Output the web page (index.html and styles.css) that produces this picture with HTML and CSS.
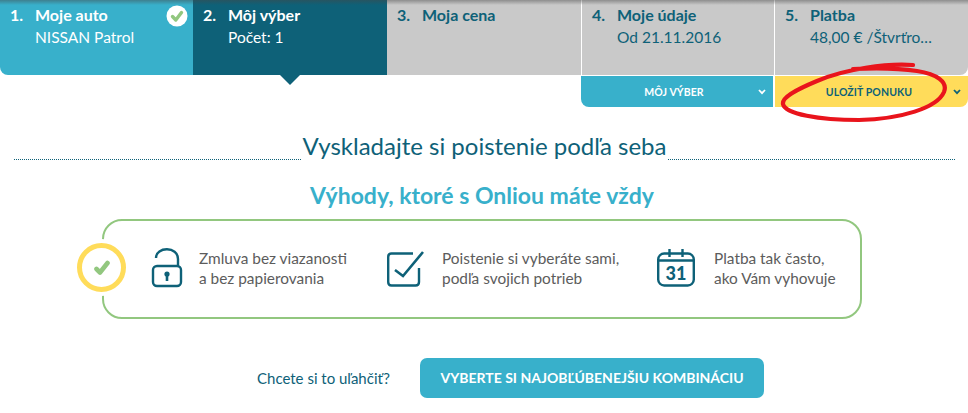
FILE: index.html
```html
<!DOCTYPE html>
<html>
<head>
<meta name="viewport" content="width=device-width, initial-scale=1">
<title>Moj vyber</title>
<link rel="stylesheet" href="styles.css">
</head>
<body>

<div class="steps">
  <div class="step done">
    <span class="num">1.</span>
    <div class="info"><b>Moje auto</b><span>NISSAN Patrol</span></div>
    <svg class="done-icon" width="22" height="22" viewBox="0 0 22 22">
      <circle cx="11" cy="11" r="10.5" fill="#fff"/>
      <path d="M6.5 11.5 L9.8 15 L15.5 7.5" fill="none" stroke="#92c77f" stroke-width="3.4" stroke-linecap="round" stroke-linejoin="round"/>
    </svg>
  </div>
  <div class="step active">
    <span class="num">2.</span>
    <div class="info"><b>Môj výber</b><span>Počet: 1</span></div>
  </div>
  <div class="step">
    <span class="num">3.</span>
    <div class="info"><b>Moja cena</b></div>
  </div>
  <div class="step line">
    <span class="num">4.</span>
    <div class="info"><b>Moje údaje</b><span>Od 21.11.2016</span></div>
  </div>
  <div class="step line last">
    <span class="num">5.</span>
    <div class="info"><b>Platba</b><span>48,00 € /Štvrťro…</span></div>
  </div>
</div>
<div class="pointer"></div>

<div class="actions">
  <div class="action blue">
    <span>MÔJ VÝBER</span>
    <svg class="chev" width="8" height="6" viewBox="0 0 8 6"><path d="M1 1 L4 4.2 L7 1" fill="none" stroke="#fff" stroke-width="1.8"/></svg>
  </div>
  <div class="action yellow">
    <span>ULOŽIŤ PONUKU</span>
    <svg class="chev" width="8" height="6" viewBox="0 0 8 6"><path d="M1 1 L4 4.2 L7 1" fill="none" stroke="#0e6178" stroke-width="1.8"/></svg>
  </div>
  <!-- red hand drawn circle -->
  <svg class="scribble" width="184" height="66" viewBox="0 0 184 66">
    <path d="M134 3 C108 1 66 7 38 19 C14 29 3 36 4 42 C6 52 40 58 80 58 C122 57 158 46 165 30 C169 20 158 12 138 9 C118 6 96 6 74 7" fill="none" stroke="#e9141c" stroke-width="4.2" stroke-linecap="round"/>
  </svg>
</div>

<div class="title-row">
  <h1>Vyskladajte si poistenie podľa seba</h1>
</div>

<h2 class="sub">Výhody, ktoré s Onliou máte vždy</h2>

<div class="benefits">
  <div class="badge">
    <svg width="20" height="16" viewBox="0 0 20 16"><path d="M4.5 9 L8 12.500 L15.500 3" fill="none" stroke="#92c77f" stroke-width="4.6" stroke-linecap="round" stroke-linejoin="round"/></svg>
  </div>
  <div class="benefit first">
    <svg width="32" height="40" viewBox="0 0 32 40">
      <path d="M5 10 C5 -1.500 27 -2 27 11 V18" fill="none" stroke="#0e6178" stroke-width="2.400"/>
      <rect x="2" y="18" width="28" height="20" rx="4" fill="none" stroke="#0e6178" stroke-width="2.400"/>
      <circle cx="16" cy="26" r="2.600" fill="#0e6178"/>
      <rect x="14.700" y="26" width="2.600" height="7" fill="#0e6178"/>
    </svg>
    <p>Zmluva bez viazanosti<br>a bez papierovania</p>
  </div>
  <div class="benefit second">
    <svg width="38" height="38" viewBox="0 0 38 38">
      <path d="M26 4.500 H4.500 Q1.200 4.500 1.200 8 V33 Q1.200 36.500 4.500 36.500 H28.500 Q32 36.500 32 33 V19" fill="none" stroke="#0e6178" stroke-width="2.400"/>
      <path d="M8 21 L16 27 L36 3" fill="none" stroke="#0e6178" stroke-width="2.600"/>
    </svg>
    <p>Poistenie si vyberáte sami,<br>podľa svojich potrieb</p>
  </div>
  <div class="benefit third">
    <div class="cal">
      <svg width="38" height="38" viewBox="0 0 38 38">
        <rect x="1.200" y="4.500" width="35.600" height="32" rx="6" fill="none" stroke="#0e6178" stroke-width="2.400"/>
        <path d="M1 11.500 H37 M12.500 0 V8 M25.500 0 V8" fill="none" stroke="#0e6178" stroke-width="2.400"/>
      </svg>
      <span>31</span>
    </div>
    <p>Platba tak často,<br>ako Vám vyhovuje</p>
  </div>
</div>

<div class="bottom">
  <span>Chcete si to uľahčiť?</span>
  <a class="big-btn">VYBERTE SI NAJOBĽÚBENEJŠIU KOMBINÁCIU</a>
</div>

</body>
</html>
```

FILE: styles.css
```css
* {
  box-sizing: border-box;
}

body {
  margin: 0;
  width: 968px;
  height: 413px;
  overflow: hidden;
  position: relative;
  background: #fff;
  font-family: Lato, "Open Sans", sans-serif;
  color: #0e6178;
}

/* Top steps */
.steps {
  display: grid;
  grid-template-columns: 193px 194px 194px 193px 194px;
  height: 75px;
  border-radius: 0 0 8px 8px;
  overflow: hidden;
  position: relative;
}

.steps:after {
  content: "";
  position: absolute;
  top: 0;
  left: 0;
  right: 0;
  height: 5px;
  background: linear-gradient(rgba(70, 70, 70, 0.45), rgba(70, 70, 70, 0));
}

.step {
  display: flex;
  position: relative;
  padding: 4px 0 0 10px;
  background: #c9c9c9;
  font-size: 16px;
  line-height: 22px;
  white-space: nowrap;
}

.step.line {
  border-left: 1px solid #fff;
}

.step.done {
  background: #38b0cb;
  color: #fff;
}

.step.active {
  background: #0e6178;
  color: #fff;
}

.num {
  width: 25px;
  font-weight: 700;
}

.info {
  display: flex;
  flex-direction: column;
  font-size: 15.5px;
}

.info b {
  font-size: 16px;
  font-weight: 700;
}

.done-icon {
  position: absolute;
  top: 5px;
  right: 5px;
}

/* little arrow under the active step */
.pointer {
  position: absolute;
  left: 280px;
  top: 75px;
  width: 0;
  height: 0;
  border-left: 10px solid transparent;
  border-right: 10px solid transparent;
  border-top: 10px solid #0e6178;
}

/* Buttons under the steps */
.actions {
  display: flex;
  justify-content: flex-end;
  gap: 2px;
  margin-top: 1px;
  position: relative;
}

.action {
  display: flex;
  align-items: center;
  position: relative;
  height: 31px;
  font-size: 10.5px;
  font-weight: 700;
  letter-spacing: 0.1px;
}

.action span {
  flex: 1;
  text-align: center;
}

.action.blue {
  width: 192px;
  background: #38b0cb;
  color: #fff;
  border-radius: 0 0 0 8px;
  padding: 0 7px 0 0;
}

.action.yellow {
  width: 193px;
  background: #ffdc5a;
  color: #0e6178;
  border-radius: 0 0 8px 0;
  padding: 0 7px 0 0;
}

.action.blue span {
  padding-left: 9px;
}

.action.yellow span {
  padding-left: 10px;
}

.scribble {
  position: absolute;
  left: 779px;
  top: -14px;
}

/* Headings */
.title-row {
  display: flex;
  align-items: center;
  justify-content: center;
  margin: 24px 13px 0 14px;
  height: 30px;
  background: repeating-linear-gradient(90deg, #0e6178 0 1px, transparent 1px 2px) 0 28px / 100% 1px no-repeat;
}

h1 {
  margin: 0;
  padding: 0 2px;
  background: #fff;
  font-size: 24px;
  font-weight: 400;
  line-height: 30px;
  color: #0e6178;
}

.sub {
  margin: 19px 0 0;
  padding-right: 4px;
  text-align: center;
  font-size: 23px;
  font-weight: 700;
  line-height: 30px;
  color: #38b0cb;
}

/* Green box */
.benefits {
  display: flex;
  align-items: center;
  position: relative;
  width: 760px;
  height: 100px;
  margin: 9px 0 0 102px;
  border: 2px solid #92c77f;
  border-radius: 20px;
}

.badge {
  display: flex;
  align-items: center;
  justify-content: center;
  position: absolute;
  left: -27px;
  top: 22px;
  width: 49px;
  height: 49px;
  border: 5px solid #ffdc5a;
  border-radius: 50%;
  background: #fff;
  box-shadow: 0 0 0 4px #fff;
}

.benefit {
  display: flex;
  align-items: center;
  position: absolute;
  top: 27px;
  height: 40px;
  font-size: 15.4px;
  line-height: 20px;
  color: #5c5c5c;
  white-space: nowrap;
}

.benefit p {
  margin: 0;
}

.benefit.first {
  left: 47px;
  gap: 16px;
}

.benefit.second {
  left: 283px;
  gap: 17px;
}

.benefit.third {
  left: 553px;
  gap: 19px;
}

.cal {
  position: relative;
  width: 38px;
  height: 38px;
}

.cal span {
  position: absolute;
  left: 0;
  right: 0;
  top: 14px;
  text-align: center;
  font-size: 18px;
  font-weight: 900;
  line-height: 20px;
  color: #0e6178;
}

/* Bottom line */
.bottom {
  display: flex;
  align-items: center;
  margin: 39px 0 0 257px;
  gap: 30px;
  font-size: 15px;
}

.big-btn {
  display: block;
  width: 344px;
  height: 40px;
  border-radius: 7px;
  background: #38b0cb;
  color: #fff;
  text-align: center;
  font-size: 14px;
  font-weight: 700;
  line-height: 40px;
}
```
